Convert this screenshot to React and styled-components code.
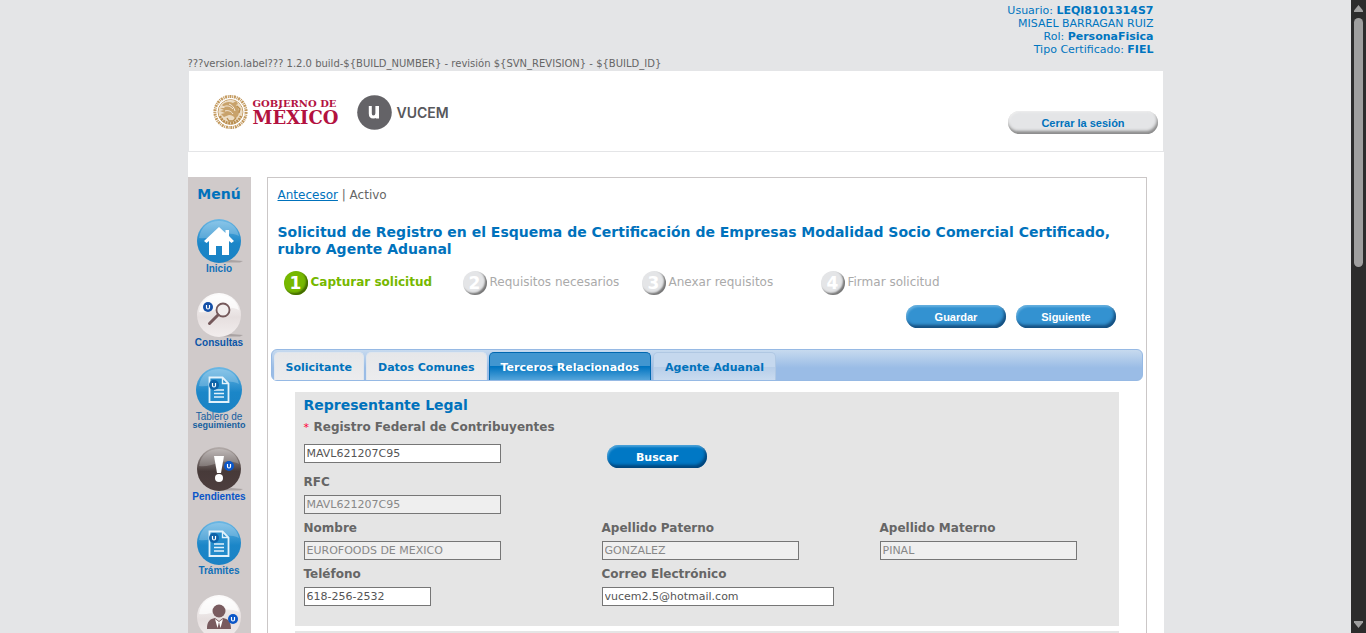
import React from "react";
import styled, { createGlobalStyle } from "styled-components";

const Global = createGlobalStyle`
  *, *::before, *::after { box-sizing: border-box; }
  body {
    margin: 0;
    background: #e4e5e7;
    color: #666;
    font: 12px/17px Verdana, "DejaVu Sans", sans-serif;
  }
  h1, h2, p, ul, ol { margin: 0; padding: 0; list-style: none; }
  button, input { font-family: inherit; }
`;

const Window = styled.div`
  display: flex;
  height: 100vh;
  overflow: hidden;
`;
const Viewport = styled.div`
  flex: 1;
  min-width: 0;
  overflow: hidden;
`;
const ScrollRail = styled.div`
  flex: none;
  width: 15px;
  padding: 5px 3px;
  display: flex;
  flex-direction: column;
  align-items: center;
  gap: 6px;
  background: #2c2c2c;
`;
const ScrollThumb = styled.div`
  width: 9px;
  height: 40%;
  border-radius: 5px;
  background: #9f9f9f;
  margin-bottom: auto;
`;
const Page = styled.div`
  max-width: 976px;
  margin: 0 auto;
`;
const UserInfo = styled.div`
  padding: 4px 10px 0;
  text-align: right;
  color: #0075c0;
  font-size: 11px;
  line-height: 13px;
`;
const Version = styled.p`
  padding-top: 1px;
  font-size: 10px;
  line-height: 14px;
`;
const Header = styled.header`
  display: flex;
  justify-content: space-between;
  align-items: flex-start;
  height: 80px;
  margin: 0 1px;
  padding: 23px 5px 0 24px;
  background: #fff;
`;
const Brands = styled.div`
  display: flex;
  align-items: center;
  gap: 18px;
`;
const Brand = styled.div`
  display: flex;
  align-items: center;
  gap: 5px;
`;
const GobText = styled.div`
  color: #b3123f;
  font-family: "DejaVu Serif", serif;
  font-weight: bold;
  font-size: 10px;
  line-height: 11px;
`;
const GobName = styled.div`
  font-size: 18px;
  line-height: 18px;
`;
const VucemText = styled.span`
  padding-top: 2px;
  color: #58585c;
  font: 600 14px/18px Inter, "Liberation Sans", sans-serif;
`;
const Pill = styled.button`
  width: ${(p) => (p.$wide ? 150 : 100)}px;
  height: 23px;
  padding: 2px 0 0 1px;
  border: 0;
  border-radius: 12px;
  color: ${(p) => (p.$tone === "grey" ? "#0072bc" : "#fff")};
  background: ${(p) => ({ grey: "#e4e5e7", light: "#3392d1", strong: "#0078c5" })[p.$tone]};
  box-shadow: ${(p) =>
    p.$tone === "grey"
      ? "inset -1px -3px 3px #8b8b8b, inset 1px 1px 2px #eee"
      : "inset -2px -3px 3px rgba(0,35,75,.6), inset 1px 2px 2px rgba(160,210,240,.45)"};
  font: bold 11px/21px ${(p) => (p.$tone === "strong" ? 'Verdana, "DejaVu Sans", sans-serif' : '"Liberation Sans", Arial, sans-serif')};
`;
const HeaderAction = styled.div`
  padding-top: 17px;
`;
const Body = styled.div`
  display: flex;
  gap: 16px;
  margin-top: 1px;
  padding: 25px 17px 0 0;
  background: #fff;
`;
const Menu = styled.nav`
  flex: none;
  width: 63px;
  background: #d0caca;
  text-align: center;
`;
const MenuTitle = styled.h2`
  padding: 8px 0 16px;
  color: #0072bc;
  font-size: 14px;
  line-height: 18px;
`;
const MenuLink = styled.a`
  display: flex;
  flex-direction: column;
  align-items: center;
  margin-bottom: 18px;
  color: ${(p) => p.$color || "#0a62bd"};
  text-decoration: none;
  font: bold 10px/12px "Liberation Sans", Arial, sans-serif;
`;
const MenuLine = styled.span`
  font-size: ${(p) => (p.$small ? 9 : 10)}px;
  font-weight: ${(p) => (p.$small ? "bold" : "normal")};
  line-height: 8px;
`;
const Panel = styled.main`
  flex: 1;
  min-width: 0;
  padding: 9px 3px 0;
  border: 1px solid #cbc7c7;
`;
const Intro = styled.div`
  padding: 0 27px 21px 7px;
`;
const Crumbs = styled.p`
  padding-bottom: 20px;
`;
const CrumbLink = styled.a`
  color: #0072bc;
`;
const Title = styled.h1`
  color: #0072bc;
  font-size: 14px;
  line-height: 17px;
`;
const Steps = styled.ol`
  display: flex;
  padding: 13px 0 10px 6px;
`;
const Step = styled.li`
  display: flex;
  gap: 3px;
  width: 179px;
  line-height: 22px;
  white-space: nowrap;
  color: ${(p) => (p.$on ? "#76b800" : "#aaa")};
  font-weight: ${(p) => (p.$on ? "bold" : "normal")};
`;
const StepDot = styled.span`
  flex: none;
  width: 24px;
  height: 24px;
  border-radius: 50%;
  color: #fff;
  text-align: center;
  font: bold 17px/24px Verdana, "DejaVu Sans", sans-serif;
  background: ${(p) => (p.$on ? "#76b800" : "#e4e5e7")};
  box-shadow: inset -2px -2px 2px ${(p) => (p.$on ? "#426a00" : "#777")};
`;
const Actions = styled.div`
  display: flex;
  justify-content: flex-end;
  gap: 10px;
`;
const Tabs = styled.div`
  display: flex;
  align-items: flex-end;
  gap: 2px;
  height: 32px;
  padding: 0 2px;
  border: 1px solid #96b9e4;
  border-radius: 6px;
  background: linear-gradient(#c7daef, #9abce6 60%);
`;
const tabSkin = {
  plain: "background: linear-gradient(#e6e7e9, #ececee); border-color: #dfe6ee; color: #0072bc;",
  active: "background: linear-gradient(#4196d0 50%, #0074c0 50%, #55a4da); border-color: #0068b0; color: #fff;",
  pale: "background: linear-gradient(#c5d8ee 50%, #b6cde8 50%, #cadbef); border-color: #b0c8e3; color: #0072bc;",
};
const Tab = styled.button`
  height: 28px;
  padding: 1px 11px 0;
  border: 1px solid;
  border-bottom: 0;
  border-radius: 5px 5px 0 0;
  font-size: 11px;
  font-weight: bold;
  white-space: nowrap;
  ${(p) => tabSkin[p.$skin]}
`;
const Sections = styled.div`
  display: flex;
  flex-direction: column;
  gap: 5px;
  padding: 11px 24px;
`;
const Section = styled.section`
  padding: 3px 9px 20px;
  background: #e5e5e5;
`;
const SectionTitle = styled.h2`
  color: #0072bc;
  font-size: 14px;
  line-height: 20px;
`;
const FieldRow = styled.div`
  display: grid;
  grid-template-columns: 298fr 278fr 230fr;
  align-items: end;
  margin-top: ${(p) => p.$top || 4}px;
`;
const Field = styled.div`
  display: flex;
  flex-direction: column;
  align-items: flex-start;
  gap: ${(p) => p.$gap || 3}px;
  min-width: 0;
`;
const Label = styled.label`
  font-size: 12px;
  font-weight: bold;
  line-height: 20px;
`;
const Required = styled.span`
  margin-right: 1px;
  color: #f03;
  font-size: 11px;
  font-weight: normal;
`;
const Input = styled.input`
  width: ${(p) => p.$w || 197}px;
  height: 19px;
  padding: 1px 2px;
  border: 1px solid #767676;
  border-radius: 0;
  background: #fff;
  color: #555;
  font-size: 11px;
  &:disabled { background: #efefef; color: #888; }
`;
const SearchSlot = styled.div`
  padding-left: 5px;
  height: 18px;
`;

const Seal = () => (
  <svg width="35" height="36" viewBox="0 0 35 36" aria-hidden="true">
    <g fill="none" stroke="#c39a5f">
      <circle cx="17.5" cy="18" r="15.6" strokeWidth="3" strokeDasharray="2 .8 1 .7" />
      <circle cx="17.5" cy="18" r="12.4" strokeWidth="1" />
    </g>
    <circle cx="17.5" cy="18" r="11.8" fill="#ecdcc3" />
    <path d="M9 11c3-3 7-4 11-2l3-2 2 3-2 1c3 3 4 7 2 11l-3 3c-1-3-3-4-6-4l-5 2-3-3 4-1-5-2 4-1-4-2 5 0z" fill="#c8a26b" />
    <path d="M10 13c4-2 7-1 10 2m-8 2c3-1 6 0 8 3m-4-10c3 1 5 3 6 7" fill="none" stroke="#f5eadb" strokeWidth="1" />
    <path d="M7 22c2 5 6 7 10.500 7s8-2 10.500-7" fill="none" stroke="#b98d4e" strokeWidth="2.400" strokeDasharray="2 .8" />
    <path d="M14 24l2 3h4l3-3M24 12l3 3-1 4" fill="none" stroke="#b98d4e" strokeWidth="1.300" />
  </svg>
);

const VucemMark = () => (
  <svg width="35" height="35" viewBox="0 0 35 35" aria-hidden="true">
    <circle cx="17.500" cy="17.500" r="17.300" fill="#646367" />
    <path d="M13.300 11v7.600c0 2.300 1 3.500 2.900 3.500 2.200 0 3.700-1.500 3.700-3.800V11M20.500 11v12.500" fill="none" stroke="#fff" strokeWidth="3" />
  </svg>
);

const balls = {
  blue: ["#6db8e4", "#1b86c8", "#1a82c4"],
  white: ["#fdfcfc", "#e6dfdf", "#f2eded"],
  dark: ["#b5aeac", "#473a39", "#4d3e3e"],
};
const Ball = ({ tone, size = 44, flat, children }) => (
  <svg width="48" height={size} viewBox={`0 0 48 ${size}`} aria-hidden="true">
    <defs>
      <linearGradient id={`ball-${tone}`} x1="0" y1="0" x2="0" y2="1">
        <stop offset="0" stopColor={balls[tone][0]} />
        <stop offset=".55" stopColor={balls[tone][1]} />
        <stop offset="1" stopColor={balls[tone][2]} />
      </linearGradient>
    </defs>
    {!flat && <path d="M22 43.500h23l3-1.500-12-1z" fill="#aaa3a3" />}
    <circle cx="24" cy={size / 2} r={size / 2} fill={`url(#ball-${tone})`} />
    <path d="M4 19C6 7 14 2 24 2s18 5 20 15c-7-3-14-3-21-1-7 2-12 4-19 3z" fill="#fff" opacity={tone === "white" ? 0.7 : 0.22} />
    {children}
  </svg>
);
const UDot = ({ x, y, r = 5, color = "#1450a8" }) => (
  <g>
    <circle cx={x} cy={y} r={r} fill={color} />
    <path d={`M${x - 1.5} ${y - 2}v2.500q0 1.500 1.500 1.500t1.500-1.500v-2.500`} fill="none" stroke="#fff" strokeWidth="1.200" />
  </g>
);
const Sheet = () => (
  <g fill="none" stroke="#e3f2fb" strokeWidth="1.800">
    <path d="M14.500 10.500h13l6 6v18.500h-19z" fill="#238bcb" />
    <path d="M27.500 10.500v6h6M19 23h10M19 26.500h10M19 30h10" strokeWidth="1.400" />
  </g>
);

const steps = ["Capturar solicitud", "Requisitos necesarios", "Anexar requisitos", "Firmar solicitud"];
const tabs = [
  ["Solicitante", "plain"],
  ["Datos Comunes", "plain"],
  ["Terceros Relacionados", "active"],
  ["Agente Aduanal", "pale"],
];

const TextField = ({ id, label, value, required, gap, ...rest }) => (
  <Field $gap={gap}>
    <Label htmlFor={id}>
      {required && <Required>* </Required>}
      {label}
    </Label>
    <Input id={id} defaultValue={value} {...rest} />
  </Field>
);

export default function App() {
  return (
    <Window>
      <Global />
      <Viewport>
        <Page>
          <UserInfo>
            <div>Usuario: <b>LEQI8101314S7</b></div>
            <div>MISAEL BARRAGAN RUIZ</div>
            <div>Rol: <b>PersonaFisica</b></div>
            <div>Tipo Certificado: <b>FIEL</b></div>
          </UserInfo>
          <Version>{"???version.label??? 1.2.0 build-${BUILD_NUMBER} - revisión ${SVN_REVISION} - ${BUILD_ID}"}</Version>
          <Header>
            <Brands>
              <Brand>
                <Seal />
                <GobText>
                  GOBIERNO DE
                  <GobName>MÉXICO</GobName>
                </GobText>
              </Brand>
              <Brand>
                <VucemMark />
                <VucemText>VUCEM</VucemText>
              </Brand>
            </Brands>
            <HeaderAction>
              <Pill type="button" $tone="grey" $wide>Cerrar la sesión</Pill>
            </HeaderAction>
          </Header>
          <Body>
            <Menu aria-label="Menú">
              <MenuTitle>Menú</MenuTitle>
              <MenuLink href="#inicio" $color="#1070b8">
                <Ball tone="blue">
                  <path d="M24 8L9 22l2.500 2L14 22v14h7v-9h6v9h7V22l2.500 2 2.500-2-5-5v-6h-3.500v3z" fill="#fff" />
                </Ball>
                Inicio
              </MenuLink>
              <MenuLink href="#consultas" $color="#0c56a8">
                <Ball tone="white">
                  <circle cx="28" cy="17" r="6.500" fill="#f2eeee" stroke="#75595b" strokeWidth="1.800" />
                  <path d="M23 22l-8.500 8.500" stroke="#75595b" strokeWidth="3" strokeLinecap="round" />
                  <UDot x={13} y={14} />
                </Ball>
                Consultas
              </MenuLink>
              <MenuLink href="#tablero" $color="#17609f">
                <Ball tone="blue" size={46} flat>
                  <Sheet />
                  <UDot x={19} y={18} color="#0e62a8" />
                </Ball>
                <MenuLine>Tablero de</MenuLine>
                <MenuLine $small>seguimiento</MenuLine>
              </MenuLink>
              <MenuLink href="#pendientes" $color="#0855c8">
                <Ball tone="dark">
                  <path d="M19 9h10l-3 17h-4z" fill="#fff" />
                  <circle cx="24" cy="31" r="4" fill="#fff" />
                  <UDot x={34} y={19} color="#0a56c8" />
                </Ball>
                Pendientes
              </MenuLink>
              <MenuLink href="#tramites" $color="#1070b8">
                <Ball tone="blue" flat>
                  <Sheet />
                  <UDot x={19} y={17} color="#0e62a8" />
                </Ball>
                Trámites
              </MenuLink>
              <MenuLink href="#usuario" aria-label="Usuario">
                <Ball tone="white">
                  <circle cx="24" cy="16" r="6.500" fill="#795b5f" />
                  <path d="M12 34c0-8 3-10 8-11l4 3 4-3c5 1 8 3 8 11z" fill="#795b5f" />
                  <path d="M20 24l2.500 9 1.500-6 1.500 6 2.500-9-4 3z" fill="#fff" />
                  <UDot x={38} y={24} color="#0a56c8" />
                </Ball>
              </MenuLink>
            </Menu>
            <Panel>
              <Intro>
                <Crumbs>
                  <CrumbLink href="#antecesor">Antecesor</CrumbLink> | Activo
                </Crumbs>
                <Title>
                  Solicitud de Registro en el Esquema de Certificación de Empresas Modalidad Socio Comercial Certificado, rubro Agente Aduanal
                </Title>
                <Steps>
                  {steps.map((s, i) => (
                    <Step key={s} $on={i === 0}>
                      <StepDot $on={i === 0}>{i + 1}</StepDot>
                      {s}
                    </Step>
                  ))}
                </Steps>
                <Actions>
                  <Pill type="button" $tone="light">Guardar</Pill>
                  <Pill type="button" $tone="light">Siguiente</Pill>
                </Actions>
              </Intro>
              <Tabs role="tablist">
                {tabs.map(([t, skin]) => (
                  <Tab key={t} type="button" role="tab" aria-selected={skin === "active"} $skin={skin}>{t}</Tab>
                ))}
              </Tabs>
              <Sections>
                <Section>
                  <SectionTitle>Representante Legal</SectionTitle>
                  <FieldRow $top={2}>
                    <TextField id="registro" label="Registro Federal de Contribuyentes" value="MAVL621207C95" required gap={6} />
                    <SearchSlot>
                      <Pill type="button" $tone="strong">Buscar</Pill>
                    </SearchSlot>
                  </FieldRow>
                  <FieldRow $top={9}>
                    <TextField id="rfc" label="RFC" value="MAVL621207C95" disabled />
                  </FieldRow>
                  <FieldRow>
                    <TextField id="nombre" label="Nombre" value="EUROFOODS DE MEXICO" disabled />
                    <TextField id="paterno" label="Apellido Paterno" value="GONZALEZ" disabled />
                    <TextField id="materno" label="Apellido Materno" value="PINAL" disabled />
                  </FieldRow>
                  <FieldRow>
                    <TextField id="telefono" label="Teléfono" value="618-256-2532" $w={127} />
                    <TextField id="correo" label="Correo Electrónico" value="vucem2.5@hotmail.com" $w={232} />
                  </FieldRow>
                </Section>
                <Section />
              </Sections>
            </Panel>
          </Body>
        </Page>
      </Viewport>
      <ScrollRail aria-hidden="true">
        <svg width="9" height="7" viewBox="0 0 9 7"><path d="M4.500 0L9 5.500V7H0V5.500z" fill="#9f9f9f" /></svg>
        <ScrollThumb />
        <svg width="9" height="7" viewBox="0 0 9 7"><path d="M4.500 7L9 1.500V0H0v1.500z" fill="#9f9f9f" /></svg>
      </ScrollRail>
    </Window>
  );
}
